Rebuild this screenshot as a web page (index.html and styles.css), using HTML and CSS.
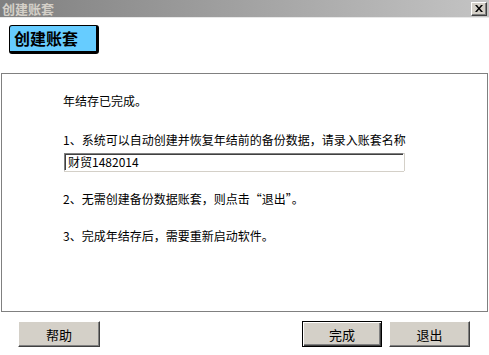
FILE: index.html
```html
<!DOCTYPE html>
<html lang="zh-CN">
<head>
<meta charset="utf-8">
<title>创建账套</title>
<link rel="stylesheet" href="styles.css">
</head>
<body>
<div class="window">
  <div class="titlebar">
    <span class="title">创建账套</span>
    <span class="close">
      <svg width="8" height="7" viewBox="0 0 8 7"><path d="M0 0h2l2 2.5L6 0h2L5 3.5 8 7H6L4 4.5 2 7H0l3-3.5z" fill="#000"/></svg>
    </span>
  </div>
  <div class="header">
    <div class="badge">创建账套</div>
  </div>
  <div class="panel">
    <p class="line first">年结存已完成。</p>
    <p class="line l1">1、系统可以自动创建并恢复年结前的备份数据，请录入账套名称</p>
    <div class="input">财贸1482014</div>
    <p class="line l2">2、无需创建备份数据账套，则点击“退出”。</p>
    <p class="line l3">3、完成年结存后，需要重新启动软件。</p>
  </div>
  <div class="buttons">
    <button class="btn help">帮助</button>
    <span class="spacer"></span>
    <button class="btn default">完成</button>
    <button class="btn">退出</button>
  </div>
</div>
</body>
</html>
```

FILE: styles.css
```css
* { box-sizing: border-box; }
html, body {
  margin: 0;
  padding: 0;
  background: #ffffff;
  font-family: "Noto Sans CJK SC", "Liberation Sans", sans-serif;
  font-size: 12px;
  color: #000;
}
.window {
  width: 489px;
  height: 355px;
  display: flex;
  flex-direction: column;
}
.titlebar {
  height: 18px;
  display: flex;
  align-items: center;
  justify-content: space-between;
  background: linear-gradient(to right, #808080, #c4c4c4);
  border-bottom: 1px solid #e8e8e8;
}
.title {
  padding-left: 2px;
  font-size: 13px;
  font-weight: bold;
  color: #d4d0c8;
  line-height: 17px;
  letter-spacing: 0;
}
.close {
  width: 16px;
  height: 14px;
  margin-right: 2px;
  background: #d4d0c8;
  border-top: 1px solid #fff;
  border-left: 1px solid #fff;
  border-right: 1px solid #404040;
  border-bottom: 1px solid #404040;
  box-shadow: inset -1px -1px 0 #808080;
  display: flex;
  align-items: center;
  justify-content: center;
}
.header {
  padding: 7px 0 0 9px;
  height: 55px;
}
.badge {
  width: 90px;
  height: 29px;
  background: #66ccff;
  border: 1px solid #000;
  border-right-width: 3px;
  border-bottom-width: 3px;
  border-radius: 3px;
  font-size: 16px;
  font-weight: bold;
  line-height: 24px;
  padding-left: 4px;
}
.panel {
  margin-left: 1px;
  width: 487px;
  height: 239px;
  border: 1px solid #808080;
  padding: 19px 0 0 61px;
  display: flex;
  flex-direction: column;
  align-items: flex-start;
}
.line {
  margin: 0;
  line-height: 16px;
  white-space: nowrap;
}
.l1 { margin-top: 23px; }
.input {
  margin-top: 5px;
  margin-left: 1px;
  width: 340px;
  height: 18px;
  border-top: 1px solid #808080;
  border-left: 1px solid #808080;
  border-right: 1px solid #fff;
  border-bottom: 1px solid #fff;
  box-shadow: inset 1px 1px 0 #404040, 0 1px 0 #d4d0c8, 1px 0 0 #d4d0c8;
  padding-left: 3px;
  line-height: 16px;
}
.l2 { margin-top: 20px; }
.l3 { margin-top: 21px; }
.buttons {
  display: flex;
  margin-top: 9px;
  padding: 0 19px 0 18px;
  gap: 7px;
}
.spacer { flex: 1; }
.btn {
  width: 81px;
  height: 26px;
  background: #d4d0c8;
  border-top: 1px solid #fff;
  border-left: 1px solid #fff;
  border-right: 1px solid #404040;
  border-bottom: 1px solid #404040;
  box-shadow: inset -1px -1px 0 #808080;
  font-family: "Noto Sans CJK SC", "Liberation Sans", sans-serif;
  font-size: 13px;
  padding: 0;
  color: #000;
}
.btn.help { width: 82px; }
.btn.default {
  width: 80px;
  border: 1px solid #000;
  box-shadow: inset 1px 1px 0 #fff, inset -1px -1px 0 #404040, inset -2px -2px 0 #808080;
}
```
